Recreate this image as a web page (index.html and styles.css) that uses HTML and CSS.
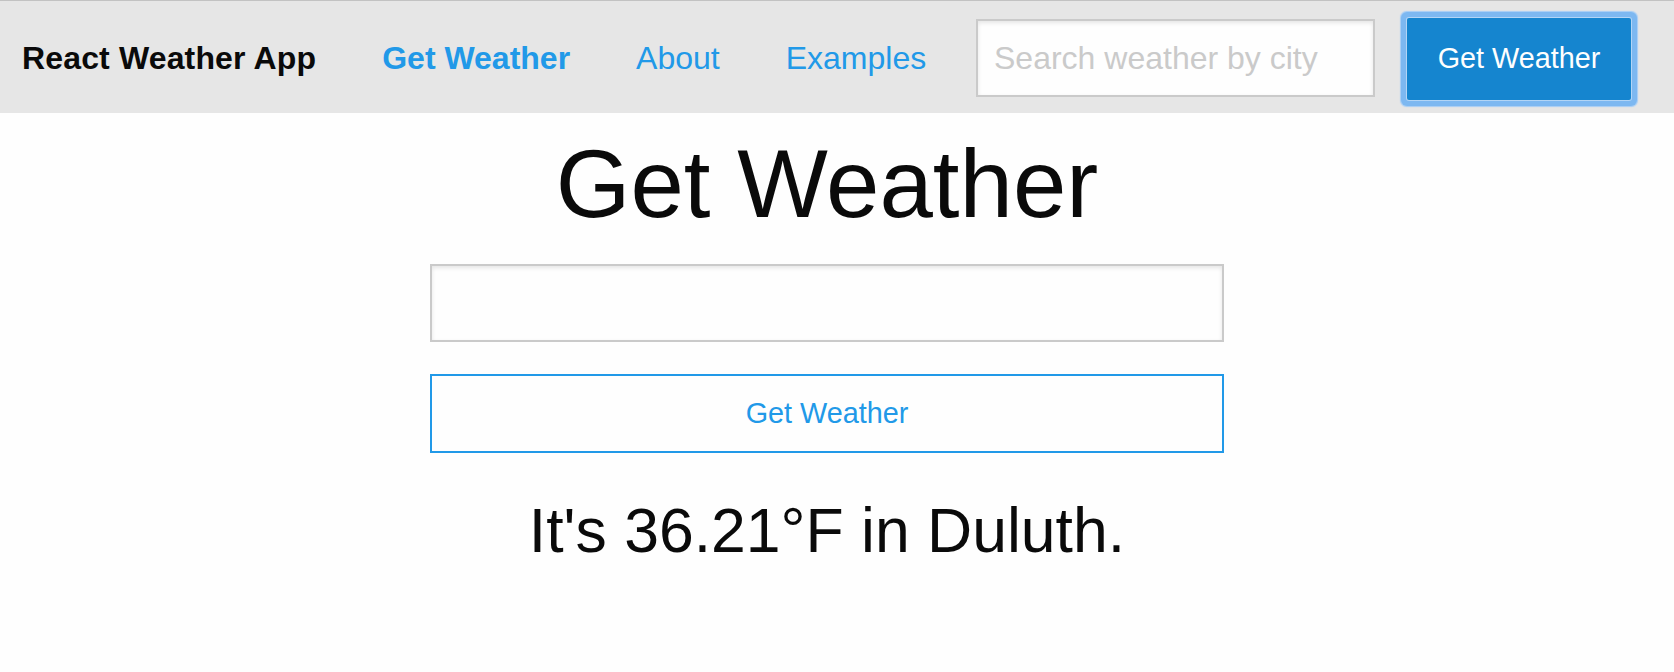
FILE: index.html
```html
<!DOCTYPE html>
<html lang="en">
<head>
<meta charset="utf-8">
<title>React Weather App</title>
<link rel="stylesheet" href="styles.css">
</head>
<body>
<nav class="topbar">
  <div class="topbar-left">
    <span class="brand">React Weather App</span>
    <ul class="menu">
      <li><a class="menu-link active" href="#">Get Weather</a></li>
      <li><a class="menu-link" href="#">About</a></li>
      <li><a class="menu-link" href="#">Examples</a></li>
    </ul>
  </div>
  <form class="topbar-right">
    <input class="search" type="search" placeholder="Search weather by city">
    <button class="search-btn" type="button">Get Weather</button>
  </form>
</nav>
<main class="page">
  <div class="column">
    <h1 class="title">Get Weather</h1>
    <form class="weather-form">
      <input class="city-input" type="text">
      <button class="hollow-btn" type="button">Get Weather</button>
    </form>
    <h3 class="result">It's 36.21°F in Duluth.</h3>
  </div>
</main>
</body>
</html>
```
FILE: styles.css
```css
* { box-sizing: border-box; }

html, body {
  margin: 0;
  padding: 0;
  background: #fefefe;
  font-family: "Liberation Sans", Arial, Helvetica, sans-serif;
  color: #0a0a0a;
}

.topbar {
  height: 113px;
  background: #e6e6e6;
  border-top: 1px solid #c2c2c2;
  display: flex;
  align-items: center;
  padding: 0 43px 0 22px;
}

.topbar-left {
  display: flex;
  align-items: center;
}

.brand {
  font-weight: bold;
  font-size: 32px;
  letter-spacing: 0.15px;
  color: #0a0a0a;
  padding-right: 33px;
  padding-top: 2px;
}

.menu {
  list-style: none;
  margin: 0;
  padding: 0;
  display: flex;
  align-items: center;
}

.menu-link {
  display: block;
  padding: 2px 33px 0;
  font-size: 32px;
  color: #2199e8;
  text-decoration: none;
}

.menu-link.active {
  font-weight: bold;
}

.topbar-right {
  margin: 0 0 0 auto;
  display: flex;
  align-items: center;
}

.search {
  width: 399px;
  height: 78px;
  margin: 2px 0 0 0;
  border: 2px solid #cacaca;
  background: #fefefe;
  box-shadow: inset 0 2px 4px rgba(10, 10, 10, 0.1);
  padding: 0 16px;
  font-family: inherit;
  font-size: 32px;
  color: #0a0a0a;
  outline: none;
}

.search::placeholder {
  color: #cacaca;
}

.search-btn {
  margin-left: 32px;
  margin-top: 3px;
  width: 224px;
  height: 82px;
  background: #1585cf;
  color: #fefefe;
  border: 0;
  border-radius: 2px;
  box-shadow: 0 0 0 1px #b3d5f6, 0 0 0 6px #7db8f1, 0 0 1px 7px #a6cdf5;
  font-family: inherit;
  font-size: 28.8px;
  padding: 0;
}

.page {
  padding-right: 20px;
}

.column {
  width: 794px;
  margin: 0 auto;
  text-align: center;
}

.title {
  margin: 4px 0 13px;
  font-size: 96px;
  line-height: 134px;
  font-weight: normal;
}

.weather-form {
  margin: 0;
}

.city-input {
  display: block;
  width: 794px;
  height: 78px;
  margin: 0 0 32px;
  border: 2px solid #cacaca;
  background: #fefefe;
  box-shadow: inset 0 2px 4px rgba(10, 10, 10, 0.1);
  font-family: inherit;
  font-size: 32px;
  padding: 0 16px;
  outline: none;
}

.hollow-btn {
  display: block;
  width: 794px;
  height: 79px;
  margin: 0;
  background: transparent;
  border: 2px solid #2199e8;
  color: #2199e8;
  font-family: inherit;
  font-size: 28.8px;
  padding: 0;
}

.result {
  margin: 35px 0 0;
  font-size: 62.5px;
  line-height: 85px;
  font-weight: normal;
}
```
